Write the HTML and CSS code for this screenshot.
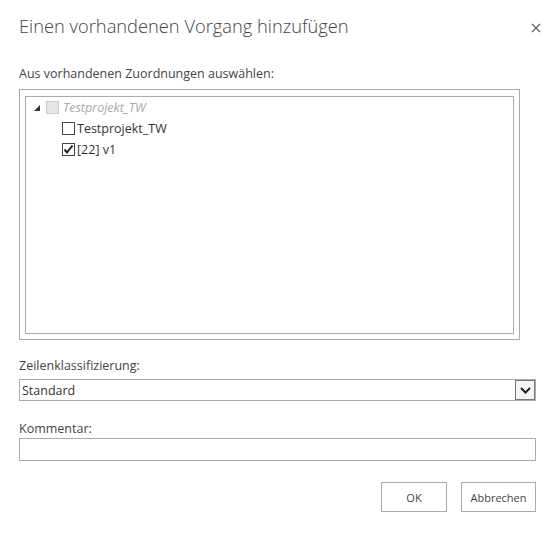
FILE: index.html
```html
<!DOCTYPE html>
<html>

<head>
    <meta name="viewport" content="width=device-width, initial-scale=1.0">
    <link rel="stylesheet" href="styles.css">
</head>

<body>
    <div class="dialog">
        <div class="header">
            <h1 class="title">Einen vorhandenen Vorgang hinzufügen</h1>
            <svg class="close" width="10" height="10" viewBox="0 0 10 10">
                <path d="M1 1 L9 9 M9 1 L1 9" stroke="#666" stroke-width="1.4"></path>
            </svg>
        </div>

        <div class="label first">Aus vorhandenen Zuordnungen auswählen:</div>
        <div class="treebox">
            <div class="tree">
                <div class="node root">
                    <svg class="expander" width="6" height="6" viewBox="0 0 6 6">
                        <polygon points="6,0 6,6 0,6" fill="#333"></polygon>
                    </svg>
                    <span class="cb disabled"></span>
                    <span class="name muted">Testprojekt_TW</span>
                </div>
                <div class="node child">
                    <span class="cb"></span>
                    <span class="name">Testprojekt_TW</span>
                </div>
                <div class="node child">
                    <span class="cb">
                        <svg width="11" height="11" viewBox="0 0 11 11">
                            <path d="M1.5 5.5 L4 8.5 L9.5 1.5" fill="none" stroke="#222" stroke-width="2"></path>
                        </svg>
                    </span>
                    <span class="name">[22] v1</span>
                </div>
            </div>
        </div>

        <div class="label second">Zeilenklassifizierung:</div>
        <div class="select">
            <span class="value">Standard</span>
            <span class="arrow">
                <svg width="11" height="7" viewBox="0 0 11 7">
                    <path d="M1 1 L5.5 5.5 L10 1" fill="none" stroke="#222" stroke-width="2"></path>
                </svg>
            </span>
        </div>

        <div class="label third">Kommentar:</div>
        <input type="text" class="textbox">

        <div class="buttons">
            <button class="btn ok">OK</button>
            <button class="btn cancel">Abbrechen</button>
        </div>
    </div>
</body>

</html>
```

FILE: styles.css
```css
body {
    margin: 0;
    background-color: white;
    font-family: "Open Sans", "Noto Sans", sans-serif;
    color: #444;
}

.dialog {
    padding: 10px 21px 0 19px;
}

.header {
    display: flex;
    justify-content: space-between;
    align-items: flex-start;
    height: 32px;
}

.title {
    margin: 0;
    font-size: 18.3px;
    font-weight: 300;
    color: #444;
    line-height: 32px;
}

.close {
    margin-top: 13px;
    margin-right: -5px;
}

.label {
    font-size: 12.5px;
    line-height: 18px;
    height: 18px;
}

.label.first {
    margin-top: 23px;
    margin-bottom: 6px;
}

.label.second {
    margin-top: 17px;
    margin-bottom: 4px;
}

.label.third {
    margin-top: 19px;
}

.treebox {
    border: 1px solid #ababab;
    padding: 6px 5px 5px 5px;
    width: 489px;
}

.tree {
    border: 1px solid #ababab;
    height: 236px;
}

.node {
    display: flex;
    align-items: center;
    height: 21px;
    font-size: 12.5px;
}

.root {
    padding-left: 8px;
}

.expander {
    margin-right: 6px;
    margin-top: 1px;
}

.child {
    padding-left: 36px;
}

.cb {
    width: 11px;
    height: 11px;
    border: 1px solid #444;
    background: white;
    display: inline-flex;
    align-items: center;
    justify-content: center;
    margin-right: 2px;
}

.cb.disabled {
    border-color: #c8c8c8;
    background: #e6e6e6;
}

.name {
    color: #333;
}

.muted {
    color: #aaa;
    font-style: italic;
    margin-left: 2px;
}

.select {
    display: flex;
    justify-content: space-between;
    align-items: center;
    border: 1px solid #ababab;
    height: 20px;
    width: 515px;
}

.value {
    font-size: 12.5px;
    padding-left: 2px;
    color: #333;
}

.arrow {
    width: 18px;
    height: 18px;
    border: 1px solid #777;
    background: #f4f4f4;
    display: flex;
    align-items: center;
    justify-content: center;
}

.textbox {
    display: block;
    box-sizing: border-box;
    width: 517px;
    height: 23px;
    border: 1px solid #ababab;
    margin: 0;
}

.buttons {
    display: flex;
    justify-content: flex-end;
    gap: 14px;
    margin-top: 21px;
}

.btn {
    height: 30px;
    padding: 0 5px;
    border: 1px solid #ababab;
    background: white;
    font-family: "Open Sans", sans-serif;
    font-size: 11px;
    color: #444;
}

.ok {
    width: 66px;
}

.cancel {
    width: 75px;
}
```
